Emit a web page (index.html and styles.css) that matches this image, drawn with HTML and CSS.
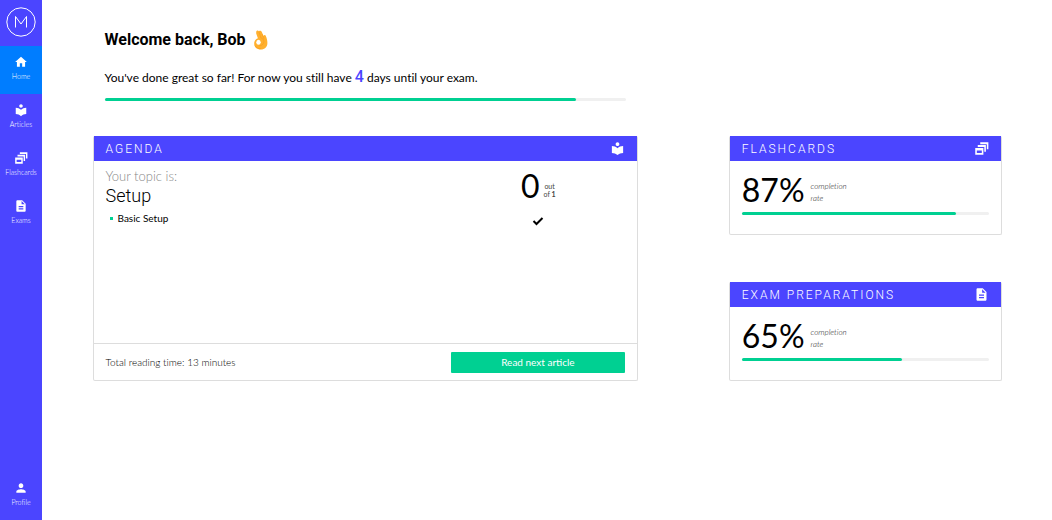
FILE: index.html
```html
<!DOCTYPE html>
<html lang="en">
<head>
<meta charset="utf-8">
<title>Dashboard</title>
<link rel="stylesheet" href="styles.css">
</head>
<body>
<svg class="sprite" aria-hidden="true">
  <symbol id="home" viewBox="0 0 24 24"><path d="M10 20v-6h4v6h5v-8h3L12 3 2 12h3v8z"/></symbol>
  <symbol id="library" viewBox="0 0 24 24"><path d="M12 11.55C9.64 9.35 6.48 8 3 8v11c3.48 0 6.64 1.35 9 3.55 2.36-2.19 5.52-3.55 9-3.55V8c-3.48 0-6.64 1.35-9 3.55zM12 8c1.66 0 3-1.34 3-3s-1.34-3-3-3-3 1.34-3 3 1.34 3 3 3z"/></symbol>
  <symbol id="cards" viewBox="0 0 24 24"><path fill-rule="evenodd" d="M2 11h13v11H2zM4.500 15v4h8v-4z"/><path d="M6 6.500h13V17h-2.500V9.500H6zM10 2h13v11h-2.500V5H10z"/></symbol>
  <symbol id="file" viewBox="0 0 24 24"><path d="M14 2H6c-1.100 0-1.990.9-1.990 2L4 20c0 1.100.89 2 1.990 2H18c1.100 0 2-.9 2-2V8l-6-6zm2 16H8v-2h8v2zm0-4H8v-2h8v2zm-3-5V3.500L18.500 9H13z"/></symbol>
  <symbol id="person" viewBox="0 0 24 24"><path d="M12 12c2.210 0 4-1.790 4-4s-1.790-4-4-4-4 1.790-4 4 1.790 4 4 4zm0 2c-2.670 0-8 1.340-8 4v2h16v-2c0-2.660-5.330-4-8-4z"/></symbol>
</svg>
<div class="app">
  <nav class="sidebar">
    <a class="logo" href="#" aria-label="Start">
      <svg viewBox="0 0 30 30"><circle cx="15" cy="15" r="14.200"/><path d="M9.500 20.500V9.500L15 17l5.500-7.500v11"/></svg>
    </a>
    <a class="nav-item active" href="#"><svg class="icon"><use href="#home"/></svg>Home</a>
    <a class="nav-item" href="#"><svg class="icon"><use href="#library"/></svg>Articles</a>
    <a class="nav-item" href="#"><svg class="icon"><use href="#cards"/></svg>Flashcards</a>
    <a class="nav-item" href="#"><svg class="icon"><use href="#file"/></svg>Exams</a>
    <a class="nav-item profile" href="#"><svg class="icon"><use href="#person"/></svg>Profile</a>
  </nav>
  <main class="content">
    <div class="main-column">
      <header class="welcome">
        <h1>Welcome back, Bob
          <svg class="hand" viewBox="0 0 16 20" role="img" aria-label="OK hand"><path fill="#ffb02e" d="M3.200 1.800C3.600.3 5.200.2 5.900 1.200c1.200-.9 2.600-.3 3 1L10.600 6c.4-1.300 2-1.200 2.200.1.900 2 1.600 4.400 1.600 6.900 0 4-2.700 6.500-6.600 6.500-4 0-6.600-2.400-6.600-5.800 0-2.700 1.400-4.700 3.700-5.500L3.200 3.500z"/><path fill="none" stroke="#f79a1e" stroke-width=".6" stroke-linecap="round" d="M6.200 2.500l1.600 5.200c2.700.9 3.600 3.200 2.800 5.300-.7 1.700-2.200 2.700-3.900 2.800M9.300 4.500l1.500 4M2.200 16c1.300 2 3.300 2.700 5.600 2.700"/><ellipse cx="5.500" cy="12.300" rx="2.200" ry="2.500" fill="#fff"/></svg>
        </h1>
        <p>You've done great so far! For now you still have <strong>4</strong> days until your exam.</p>
        <div class="bar"><div class="fill" style="width:90.500%"></div></div>
      </header>
      <section class="card agenda">
        <h2>Agenda <svg class="icon"><use href="#library"/></svg></h2>
        <div class="agenda-body">
          <div class="topic">
            <p class="topic-label">Your topic is:</p>
            <h3>Setup</h3>
            <ul><li>Basic Setup</li></ul>
          </div>
          <div class="progress">
            <div class="count"><span class="big">0</span><span class="out">out<br>of <b>1</b></span></div>
            <svg class="check" viewBox="0 0 12 10" role="img" aria-label="Done"><path d="M1.500 5l3 3 6-6"/></svg>
          </div>
        </div>
        <footer>
          <span>Total reading time: 13 minutes</span>
          <button type="button">Read next article</button>
        </footer>
      </section>
    </div>
    <div class="stats">
      <section class="card">
        <h2>Flashcards <svg class="icon"><use href="#cards"/></svg></h2>
        <div class="stat">
          <div class="rate"><span class="big">87%</span><em>completion<br>rate</em></div>
          <div class="bar"><div class="fill" style="width:87%"></div></div>
        </div>
      </section>
      <section class="card">
        <h2>Exam preparations <svg class="icon"><use href="#file"/></svg></h2>
        <div class="stat">
          <div class="rate"><span class="big">65%</span><em>completion<br>rate</em></div>
          <div class="bar"><div class="fill" style="width:65%"></div></div>
        </div>
      </section>
    </div>
  </main>
</div>
</body>
</html>
```
FILE: styles.css
```css
* { box-sizing: border-box; }
body { margin: 0; background: #fff; color: #000; font-family: Lato, sans-serif; font-size: 10px; font-variant-ligatures: none; }
h1, h2, h3, p, ul { margin: 0; padding: 0; }
.sprite { display: none; }
.app { display: flex; min-height: 100vh; }
.icon { display: block; width: 14px; height: 14px; fill: #fff; }

.sidebar { display: flex; flex-direction: column; flex: none; width: 42px; background: #4b45ff; }
.logo { display: flex; justify-content: center; height: 46px; padding-top: 7px; }
.logo svg { width: 30px; height: 30px; fill: none; stroke: #fff; stroke-width: 1; }
.nav-item { display: flex; flex-direction: column; align-items: center; gap: 2px; height: 48px; padding-top: 9px; color: #fff; font-size: 7px; font-weight: 300; line-height: 10px; text-decoration: none; }
.nav-item.active { background: #007dff; }
.profile { margin-top: auto; }

.content { flex: 1; display: grid; grid-template-columns: 5fr 54fr 9fr 27fr 5fr; align-items: end; align-content: start; }
.main-column { grid-column: 2; }
.welcome { padding: 28px 12px 35px; }
h1 { display: flex; align-items: center; gap: 7px; font: bold 16px/24px Roboto, sans-serif; }
.hand { width: 16px; height: 20px; }
.welcome p { margin: 13px 0 8px; font-size: 12px; line-height: 24px; }
.welcome strong { color: #4b45ff; font: 500 16px/24px Roboto, sans-serif; }
.bar { height: 3px; border-radius: 2px; background: #f0f0f0; }
.fill { height: 3px; border-radius: 2px; background: #00d092; }

.card { border: 1px solid #ddd; border-top: 0; border-radius: 2px; }
h2 { display: flex; align-items: center; justify-content: space-between; height: 25px; padding: 0 12px; background: #4b45ff; color: #fff; font: 300 12px/24px Roboto, sans-serif; letter-spacing: 2px; text-transform: uppercase; }
h2 .icon { width: 15px; height: 15px; }
.agenda { display: flex; flex-direction: column; min-height: 245px; }
.agenda-body { flex: 1; display: grid; grid-template-columns: 2fr 1fr; padding: 7px 12px; }
.topic-label { color: #888; font-size: 13px; font-weight: 300; line-height: 16px; }
h3 { font: 300 18px/24px Roboto, sans-serif; }
ul { margin-top: 2px; list-style: none; }
li { display: flex; align-items: center; gap: 5px; padding-left: 4px; line-height: 16px; }
li::before { content: ""; width: 3px; height: 3px; background: #00d092; }
.progress { display: flex; flex-direction: column; align-items: center; gap: 12px; }
.count { display: flex; align-items: center; gap: 4px; }
.big { font-size: 32px; line-height: 36px; }
.out { padding-top: 8px; color: #444; font-size: 7px; line-height: 8px; text-align: center; }
.check { width: 12px; height: 10px; fill: none; stroke: #000; stroke-width: 2; }
footer { display: flex; align-items: center; justify-content: space-between; height: 37px; padding: 0 12px; border-top: 1px solid #ddd; font-weight: 300; }
button { width: 174px; height: 21px; padding: 0; border: 0; border-radius: 1px; background: #00d092; color: #fff; font: 10px Lato, sans-serif; }

.stats { grid-column: 4; display: flex; flex-direction: column; gap: 47px; }
.stat { padding: 11px 12px 19px; }
.rate { display: flex; align-items: center; gap: 6px; margin-bottom: 4px; }
.rate em { padding-top: 4px; color: #222; font-size: 8px; font-weight: 300; line-height: 12px; }
```
